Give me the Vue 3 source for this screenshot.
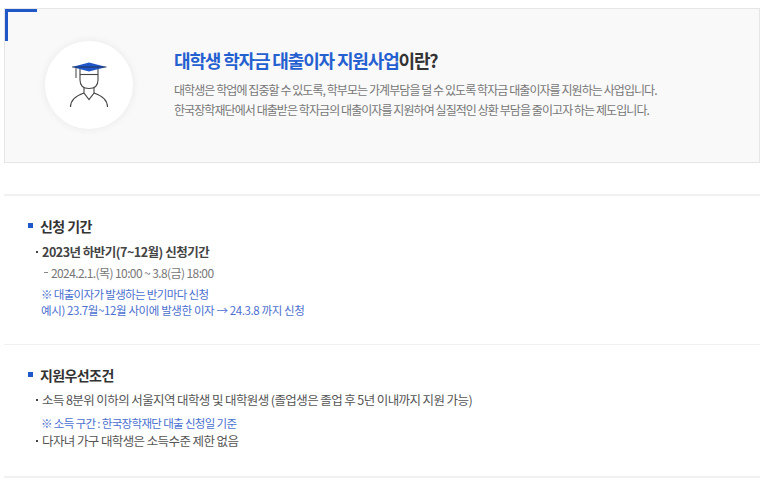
<script setup>
</script>

<template>
  <div class="page">
    <section class="hero">
      <span class="corner"></span>
      <div class="circle">
        <svg width="64" height="64" viewBox="0 0 64 64" fill="none">
          <path d="M13.5 54 C13.5 47 18 43 27 40" stroke="#444" stroke-width="1.1"/>
          <path d="M50.5 54 C50.5 47 46 43 37 40" stroke="#444" stroke-width="1.1"/>
          <path d="M27 33 V40 L32 46.5 L37 40 V33" stroke="#444" stroke-width="1.1"/>
          <path d="M23 16 V27 C23 33 27 35.5 32 35.5 C37 35.5 41 33 41 27 V16" stroke="#444" stroke-width="1.1" fill="#fff"/>
          <path d="M23 21.5 H41" stroke="#444" stroke-width="1.1"/>
          <path d="M15 14 L32 9.5 L49.5 14 L32 18.5 Z" fill="#1f57c8"/>
          <path d="M15 14 H49.5" stroke="#222" stroke-width=".7"/>
          <path d="M19 15 V25" stroke="#777" stroke-width="1.4"/>
        </svg>
      </div>
      <div class="hero-text">
        <h1><em>대학생 학자금 대출이자 지원사업</em>이란?</h1>
        <p>대학생은 학업에 집중할 수 있도록, 학부모는 가계부담을 덜 수 있도록 학자금 대출이자를 지원하는 사업입니다.</p>
        <p>한국장학재단에서 대출받은 학자금의 대출이자를 지원하여 실질적인 상환 부담을 줄이고자 하는 제도입니다.</p>
      </div>
    </section>

    <section class="block first">
      <h2>신청 기간</h2>
      <div class="item strong">2023년 하반기(7~12월) 신청기간</div>
      <div class="dash">2024.2.1.(목) 10:00 ~ 3.8(금) 18:00</div>
      <div class="note top">※ 대출이자가 발생하는 반기마다 신청</div>
      <div class="note">예시) 23.7월~12월 사이에 발생한 이자 → 24.3.8 까지 신청</div>
    </section>

    <section class="block second">
      <h2>지원우선조건</h2>
      <div class="item">소득 8분위 이하의 서울지역 대학생 및 대학원생 (졸업생은 졸업 후 5년 이내까지 지원 가능)</div>
      <div class="note mid">※ 소득 구간 : 한국장학재단 대출 신청일 기준</div>
      <div class="item tight">다자녀 가구 대학생은 소득수준 제한 없음</div>
    </section>
  </div>
</template>

<style>
html, body { margin: 0; background: #fff; overflow: hidden; }
</style>

<style scoped>
.page {
  width: 768px;
  height: 480px;
  box-sizing: border-box;
  padding: 8px 8px 0 4px;
  font-family: "Noto Sans CJK KR", "Noto Sans", sans-serif;
  letter-spacing: -0.6px;
  overflow: hidden;
}
.hero {
  position: relative;
  height: 155px;
  box-sizing: border-box;
  background: #f9f9f9;
  border: 1px solid #e6e6e6;
  display: flex;
  align-items: center;
  padding-left: 40px;
}
.corner {
  position: absolute;
  left: 0;
  top: 0;
  width: 32px;
  height: 32px;
  border-top: 3px solid #2058c8;
  border-left: 3px solid #2058c8;
  box-sizing: border-box;
}
.circle {
  width: 88px;
  height: 88px;
  margin-top: -1px;
  border-radius: 50%;
  background: #fff;
  box-shadow: 0 0 8px rgba(0, 0, 0, .07);
  display: flex;
  align-items: center;
  justify-content: center;
  flex: none;
}
.circle svg { display: block; }
.hero-text { margin-left: 41px; margin-top: -5px; }
h1 {
  margin: 0 0 7px;
  font-size: 18px;
  line-height: 26px;
  font-weight: 700;
  letter-spacing: -1.15px;
  color: #333;
}
h1 em { font-style: normal; color: #2560d0; }
p {
  margin: 0;
  font-size: 12px;
  line-height: 20px;
  letter-spacing: -0.93px;
  color: #777;
}
.block { border-top: 2px solid #f1f1f1; padding-left: 24px; }
.first { margin-top: 31px; height: 150px; padding-top: 20px; box-sizing: border-box; }
.second { height: 134px; padding-top: 20px; box-sizing: border-box; border-top-width: 1px; border-bottom: 2px solid #f1f1f1; }
h2 {
  position: relative;
  margin: 0 0 6px;
  padding-left: 12px;
  font-size: 14px;
  line-height: 20px;
  font-weight: 700;
  color: #333;
}
.second h2 { margin-bottom: 5px; }
h2::before {
  content: "";
  position: absolute;
  left: 0;
  top: 7px;
  width: 5px;
  height: 5px;
  background: #2058c8;
}
.item {
  position: relative;
  margin-left: 14px;
  font-size: 12.5px;
  line-height: 20px;
  color: #555;
}
.item::before {
  content: "";
  position: absolute;
  left: -6px;
  top: 9px;
  width: 2px;
  height: 2px;
  background: #444;
}
.strong { font-weight: 700; letter-spacing: -0.5px; color: #444; }
.dash {
  position: relative;
  margin: 1px 0 0 23px;
  font-size: 12px;
  line-height: 20px;
  color: #777;
}
.dash::before {
  content: "";
  position: absolute;
  left: -7px;
  top: 9px;
  width: 4px;
  height: 1px;
  background: #888;
}
.note {
  margin-left: 13px;
  font-size: 11.5px;
  line-height: 16px;
  letter-spacing: -0.39px;
  color: #4a6fd0;
}
.top { margin-top: 3px; letter-spacing: -0.66px; }
.mid { margin-top: 4px; line-height: 18px; letter-spacing: -0.66px; }
.tight { margin-top: -1px; }
</style>
